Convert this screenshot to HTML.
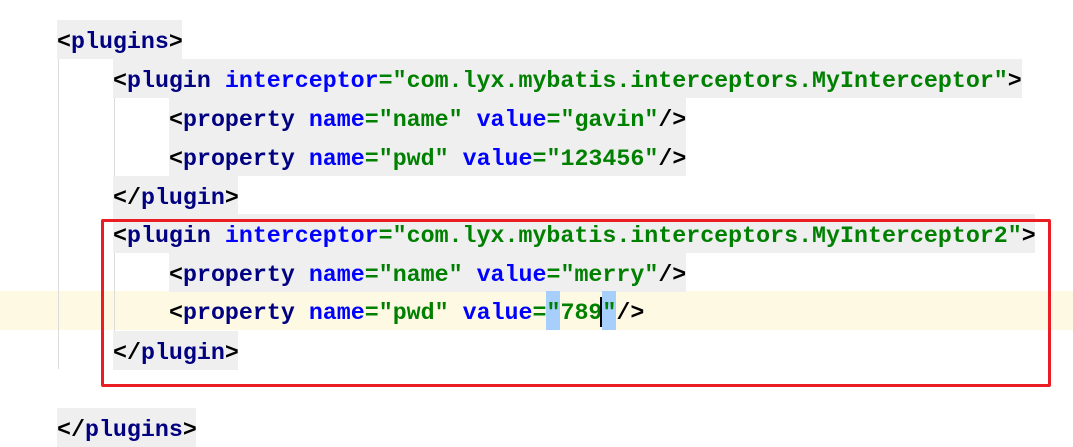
<!DOCTYPE html>
<html><head><meta charset="utf-8"><style>
body{margin:0;width:1073px;height:440px;background:#fff;overflow:hidden;position:relative;font-family:"Liberation Mono",monospace;font-weight:bold;font-size:23.3px}
.r{position:absolute;height:39px;line-height:45px;white-space:pre;background:#efefef;overflow:hidden}
.t{color:#000080}.a{color:#0000ff}.v{color:#008000}.p{color:#000}
.g{position:absolute;width:1px;background:#dcdcdc}
</style></head><body>
<div style="position:absolute;left:0;top:291px;width:1073px;height:39px;background:#fef9e3"></div>
<div class="g" style="left:58px;top:59px;height:310px"></div>
<div class="g" style="left:114px;top:98px;height:78px"></div>
<div class="g" style="left:114px;top:253px;height:78px"></div>
<div class="r" style="left:57px;top:20px;width:125px"><span class="p">&lt;</span><span class="t">plugins</span><span class="p">&gt;</span></div>
<div class="r" style="left:113px;top:59px;width:909px"><span class="p">&lt;</span><span class="t">plugin </span><span class="a">interceptor</span><span class="v">="com.lyx.mybatis.interceptors.MyInterceptor"</span><span class="p">&gt;</span></div>
<div class="r" style="left:169px;top:98px;width:517px"><span class="p">&lt;</span><span class="t">property </span><span class="a">name</span><span class="v">="name" </span><span class="a">value</span><span class="v">="gavin"</span><span class="p">/&gt;</span></div>
<div class="r" style="left:169px;top:137px;width:517px"><span class="p">&lt;</span><span class="t">property </span><span class="a">name</span><span class="v">="pwd" </span><span class="a">value</span><span class="v">="123456"</span><span class="p">/&gt;</span></div>
<div class="r" style="left:113px;top:176px;width:125px"><span class="p">&lt;/</span><span class="t">plugin</span><span class="p">&gt;</span></div>
<div class="r" style="left:113px;top:214px;width:922px"><span class="p">&lt;</span><span class="t">plugin </span><span class="a">interceptor</span><span class="v">="com.lyx.mybatis.interceptors.MyInterceptor2"</span><span class="p">&gt;</span></div>
<div class="r" style="left:169px;top:253px;width:517px"><span class="p">&lt;</span><span class="t">property </span><span class="a">name</span><span class="v">="name" </span><span class="a">value</span><span class="v">="merry"</span><span class="p">/&gt;</span></div>
<div style="position:absolute;left:546px;top:291px;width:14px;height:39px;background:#a6d0fb"></div>
<div style="position:absolute;left:602px;top:291px;width:14px;height:39px;background:#a6d0fb"></div>
<div class="r" style="left:169px;top:291px;background:transparent"><span class="p">&lt;</span><span class="t">property </span><span class="a">name</span><span class="v">="pwd" </span><span class="a">value</span><span class="v">="789"</span><span class="p">/&gt;</span></div>
<div style="position:absolute;left:600px;top:297px;width:2px;height:30px;background:#000"></div>
<div class="r" style="left:113px;top:331px;width:125px"><span class="p">&lt;/</span><span class="t">plugin</span><span class="p">&gt;</span></div>
<div class="r" style="left:57px;top:408px;width:139px"><span class="p">&lt;/</span><span class="t">plugins</span><span class="p">&gt;</span></div>
<div style="position:absolute;left:101px;top:219px;width:944px;height:162px;border:3px solid #ea1c24;border-radius:2px"></div>
</body></html>
